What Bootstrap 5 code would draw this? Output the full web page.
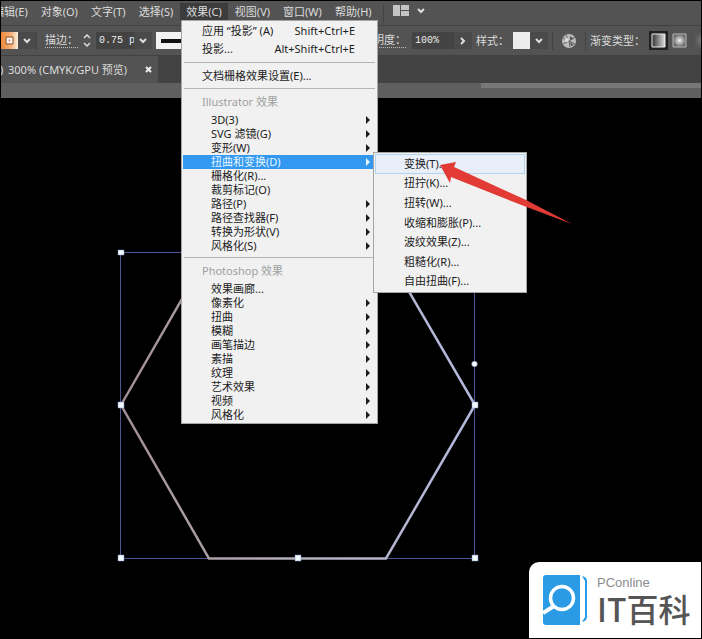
<!DOCTYPE html>
<html lang="zh-CN">
<head>
<meta charset="utf-8">
<meta name="viewport" content="width=device-width, initial-scale=1">
<title>Illustrator 效果菜单</title>
<link href="https://cdn.jsdelivr.net/npm/bootstrap@5.3.0/dist/css/bootstrap.min.css" rel="stylesheet">
<style>
body{background:#000;font-family:"Noto Sans","Noto Sans CJK SC",sans-serif;font-size:11px;line-height:14px;color:#dcdcdc}
button,input{font:inherit;color:inherit;border:0;padding:0;background:transparent}
.app-frame{border:1px solid #000;overflow:hidden}
.menu-strip{height:25px;background:#535353;border-bottom:1px solid #414141;gap:1px}
.menu-strip .top-item{padding:0 6px;height:18px;margin-top:2px;white-space:nowrap}
.menu-strip .top-item.first-item{margin-left:-14px}
.menu-strip .top-item.opened{background:#3c3c3c}
.rule-v{width:1px;height:18px;background:#434343}
.control-strip{height:30px;background:#535353;border-bottom:1px solid #414141;white-space:nowrap}
.control-strip>*{flex-shrink:0}
.control-strip .caption{border-bottom:1px dotted #bbb;line-height:14px}
.field{background:#434343;height:17px;font-family:"Liberation Mono","Noto Sans CJK SC",monospace;font-size:10px;padding-left:3px;color:#eee}
.field-weight{width:38px}
.field-opacity{width:42px;margin-left:6px}
.chev-btn{width:18px;height:17px;background:#4a4a4a;line-height:0}
.tab-strip{height:27px;background:#424242}
.doc-tab{width:157px;background:#535353;padding-right:5px}
.doc-tab .dot{width:4px;margin-left:-1px;margin-right:4px}
.scroll-strip{height:15px;background:#5f5f5f}
.scroll-thumb{height:5px;width:220px;background:#777}
.artboard{padding:151px 0 0 116px}
.fx-menu{left:180px;top:19px;width:197px;height:404px;background:#f1f1f1;border:1px solid #a5a5a5;padding:1px;color:#1c1c1c;z-index:5}
.fx-menu .entry{height:14px;padding:0 6px 0 28px;line-height:14px;text-align:left}
.fx-menu .entry.tall{height:18px;padding:0 21px 0 19px}
.fx-menu .entry.chosen{background:#3399f0;color:#e4f5ff}
.fx-menu .section-name{height:20px;line-height:18px;padding-left:19px;color:#a0a0a0}
.fx-menu .divide{height:1px;background:#b5b5b5;margin:4px 1px}
.tri{width:0;height:0;border:4px solid transparent;border-left-color:currentColor;border-right-width:0}
.sub-menu{left:372px;top:151px;width:154px;height:141px;background:#f1f1f1;border:1px solid #a5a5a5;padding:1px;color:#1c1c1c;z-index:6}
.sub-menu .entry{padding-left:29px;text-align:left}
.sub-menu .entry.hovered{background:#e9eff8;outline:1px solid #b4d3ee;outline-offset:-1px}
.pointer{left:438px;top:158px;z-index:7}
.brand{right:0;bottom:0;width:172px;height:76px;background:#fff;border-top-left-radius:10px;padding:13px 0 0 14px;gap:10px;z-index:8}
.brand-small{font-family:"Liberation Sans",sans-serif;font-size:13px;line-height:15px;color:#8c8c8c}
.brand-big{font-family:"Noto Sans CJK SC",sans-serif;font-size:32px;font-weight:500;line-height:36px;color:#555;white-space:nowrap}
</style>
<script src="https://cdn.jsdelivr.net/npm/bootstrap@5.3.0/dist/js/bootstrap.bundle.min.js"></script>
</head>
<body>
<div class="app-frame position-relative d-flex flex-column min-vh-100">
  <nav class="menu-strip d-flex align-items-start">
    <button class="top-item first-item">编辑(E)</button>
    <button class="top-item">对象(O)</button>
    <button class="top-item">文字(T)</button>
    <button class="top-item">选择(S)</button>
    <button class="top-item opened">效果(C)</button>
    <button class="top-item">视图(V)</button>
    <button class="top-item">窗口(W)</button>
    <button class="top-item">帮助(H)</button>
    <span class="rule-v ms-1 mt-1"></span>
    <button class="d-flex align-items-center gap-2 ms-2 mt-1" aria-label="排列文档">
      <svg width="16" height="11"><path d="M0 0h7v11H0zM8 0h8v5H8zM8 6h8v5H8z" fill="#c4c4c4"/></svg>
      <svg width="8" height="6"><path d="M1 1l3 3 3-3" fill="none" stroke="#ddd" stroke-width="2"/></svg>
    </button>
  </nav>

  <div class="control-strip d-flex align-items-center">
    <button class="d-flex" aria-label="填色"><svg width="17" height="17"><defs><linearGradient id="og"><stop stop-color="#ed8a3c"/><stop offset=".6" stop-color="#f5b07a"/><stop offset="1" stop-color="#fff0e0"/></linearGradient></defs><path fill="url(#og)" d="M0 0h17v17H0z"/><path d="M6.500 6.500h4v4h-4z" fill="#d88" stroke="#fff" stroke-width="2"/><path d="M5 5h7v7H5z" fill="none" stroke="#8a5830"/></svg></button>
    <button class="chev-btn" aria-label="填色选项"><svg width="8" height="6"><path d="M1 1l3 3 3-3" fill="none" stroke="#ddd" stroke-width="2"/></svg></button>
    <span class="rule-v me-2"></span>
    <label class="caption" for="weight">描边：</label>
    <button class="ms-1 d-flex" aria-label="调整粗细"><svg width="10" height="15"><path d="M2 5l3-3 3 3M2 10l3 3 3-3" fill="none" stroke="#ddd" stroke-width="1.500"/></svg></button>
    <input id="weight" class="field field-weight ms-1" value="0.75 pt">
    <button class="chev-btn" aria-label="粗细选项"><svg width="8" height="6"><path d="M1 1l3 3 3-3" fill="none" stroke="#ddd" stroke-width="2"/></svg></button>
    <svg class="ms-1" width="195" height="17"><path fill="#f2f2f2" d="M0 0h70v17H0z"/><path fill="#111" d="M5 7h60v4H5z"/></svg>
    <label class="caption" for="opacity">不透明度：</label>
    <input id="opacity" class="field field-opacity" value="100%">
    <button class="chev-btn" aria-label="不透明度选项"><svg width="6" height="8"><path d="M1 1l3 3-3 3" fill="none" stroke="#ddd" stroke-width="2"/></svg></button>
    <span class="ms-1">样式：</span>
    <button class="d-flex ms-1" aria-label="图形样式"><svg width="17" height="17"><path fill="#ececec" d="M0 0h17v17H0z"/></svg></button>
    <button class="chev-btn" aria-label="样式选项"><svg width="8" height="6"><path d="M1 1l3 3 3-3" fill="none" stroke="#ddd" stroke-width="2"/></svg></button>
    <span class="rule-v ms-1"></span>
    <button class="d-flex mx-2" aria-label="重新着色图稿"><svg width="16" height="16"><circle cx="8" cy="8" r="7" fill="#bcbcbc"/><path d="M8 8L5 2M8 8l6-4M8 8l6 3M8 8l1 6M8 8l-6 3M8 8L2 5" stroke="#666"/><path d="M9 3l4 3-4 1zM9 9l4 3-3 1z" fill="#555"/><circle cx="6" cy="7" r="2" fill="#ddd"/></svg></button>
    <span class="rule-v me-1"></span>
    <span>渐变类型：</span>
    <button class="d-flex ms-1" aria-label="线性"><svg width="19" height="19"><defs><linearGradient id="lg"><stop stop-color="#333"/><stop offset="1" stop-color="#ddd"/></linearGradient><radialGradient id="rg"><stop stop-color="#f2f2f2"/><stop offset="1" stop-color="#666"/></radialGradient></defs><path fill="#222" d="M0 0h19v19H0z"/><path d="M3 3h13v13H3z" fill="url(#lg)" stroke="#eee"/></svg></button>
    <button class="d-flex ms-1" aria-label="径向"><svg width="15" height="15"><path d="M1 1h13v13H1z" fill="url(#rg)" stroke="#bbb"/></svg></button>
    <button class="d-flex ms-2 opacity-25" aria-label="任意形状"><svg width="15" height="15"><path d="M0 0h15v15H0z" fill="url(#rg)"/></svg></button>
  </div>

  <div class="tab-strip d-flex">
    <div class="doc-tab d-flex align-items-center">
      <span class="dot">)</span><span class="flex-grow-1 text-nowrap">300% (CMYK/GPU 预览)</span>
      <button class="d-flex" aria-label="关闭"><svg width="8" height="8"><path d="M1 1l5 5M6 1L1 6" stroke="#eee" stroke-width="2"/></svg></button>
    </div>
  </div>
  <div class="scroll-strip d-flex justify-content-end"><div class="scroll-thumb"></div></div>

  <main class="artboard flex-grow-1">
    <svg class="d-block" width="362" height="316" viewBox="117 249 362 316">
      <defs><linearGradient id="hx" gradientUnits="userSpaceOnUse" x1="121" y1="0" x2="475" y2="0"><stop stop-color="#a08e92"/><stop offset=".5" stop-color="#b5b0bd"/><stop offset="1" stop-color="#b4b9e0"/></linearGradient></defs>
      <path d="M120.500 252.500h354v306h-354z" fill="none" stroke="#4d5795"/>
      <path d="M121 405l88-153h177l89 153-89 153.500H209z" fill="none" stroke="url(#hx)" stroke-width="2.500"/>
      <g fill="#f4fbff" stroke="#7188b8" stroke-width=".5"><path d="M118 250h6v5h-6zM118 402h6v6h-6zM118 555h6v6h-6zM295 555h6v6h-6zM472 555h6v6h-6zM472 402h6v6h-6z"/><circle cx="474.500" cy="364" r="2.800"/></g>
    </svg>
  </main>

  <div class="fx-menu position-absolute d-flex flex-column">
    <button class="entry tall d-flex justify-content-between align-items-center"><span>应用 “投影” (A)</span><span>Shift+Ctrl+E</span></button>
    <button class="entry tall d-flex justify-content-between align-items-center"><span>投影...</span><span>Alt+Shift+Ctrl+E</span></button>
    <div class="divide"></div>
    <button class="entry tall d-flex align-items-center">文档栅格效果设置(E)...</button>
    <div class="divide"></div>
    <div class="section-name">Illustrator 效果</div>
    <button class="entry d-flex justify-content-between align-items-center">3D(3)<span class="tri"></span></button>
    <button class="entry d-flex justify-content-between align-items-center">SVG 滤镜(G)<span class="tri"></span></button>
    <button class="entry d-flex justify-content-between align-items-center">变形(W)<span class="tri"></span></button>
    <button class="entry chosen d-flex justify-content-between align-items-center">扭曲和变换(D)<span class="tri"></span></button>
    <button class="entry d-flex align-items-center">栅格化(R)...</button>
    <button class="entry d-flex align-items-center">裁剪标记(O)</button>
    <button class="entry d-flex justify-content-between align-items-center">路径(P)<span class="tri"></span></button>
    <button class="entry d-flex justify-content-between align-items-center">路径查找器(F)<span class="tri"></span></button>
    <button class="entry d-flex justify-content-between align-items-center">转换为形状(V)<span class="tri"></span></button>
    <button class="entry d-flex justify-content-between align-items-center">风格化(S)<span class="tri"></span></button>
    <div class="divide"></div>
    <div class="section-name">Photoshop 效果</div>
    <button class="entry d-flex align-items-center">效果画廊...</button>
    <button class="entry d-flex justify-content-between align-items-center">像素化<span class="tri"></span></button>
    <button class="entry d-flex justify-content-between align-items-center">扭曲<span class="tri"></span></button>
    <button class="entry d-flex justify-content-between align-items-center">模糊<span class="tri"></span></button>
    <button class="entry d-flex justify-content-between align-items-center">画笔描边<span class="tri"></span></button>
    <button class="entry d-flex justify-content-between align-items-center">素描<span class="tri"></span></button>
    <button class="entry d-flex justify-content-between align-items-center">纹理<span class="tri"></span></button>
    <button class="entry d-flex justify-content-between align-items-center">艺术效果<span class="tri"></span></button>
    <button class="entry d-flex justify-content-between align-items-center">视频<span class="tri"></span></button>
    <button class="entry d-flex justify-content-between align-items-center">风格化<span class="tri"></span></button>
  </div>

  <div class="sub-menu position-absolute d-flex flex-column">
    <button class="entry hovered flex-fill">变换(T)...</button>
    <button class="entry flex-fill">扭拧(K)...</button>
    <button class="entry flex-fill">扭转(W)...</button>
    <button class="entry flex-fill">收缩和膨胀(P)...</button>
    <button class="entry flex-fill">波纹效果(Z)...</button>
    <button class="entry flex-fill">粗糙化(R)...</button>
    <button class="entry flex-fill">自由扭曲(F)...</button>
  </div>

  <svg class="pointer position-absolute pe-none" width="136" height="70" viewBox="439 159 136 70"><path d="M440 165l16-3-2 5 72 33 46 24-48-18-73-29-1 6z" fill="#e23b36"/></svg>

  <div class="brand position-absolute d-flex">
    <svg width="44" height="51"><path d="M3 0h34v50H3q-3 0-3-3V3q0-3 3-3z" fill="#2a9be4"/><path d="M39 1q5 1 5 5v36q0 4-5 5l3-5V6z" fill="#2a9be4"/><circle cx="19" cy="23" r="11.500" fill="none" stroke="#fff" stroke-width="3.500"/><path d="M11 31L0 38" stroke="#fff" stroke-width="4"/></svg>
    <div><div class="brand-small">PConline</div><div class="brand-big">IT百科</div></div>
  </div>
</div>
</body>
</html>
